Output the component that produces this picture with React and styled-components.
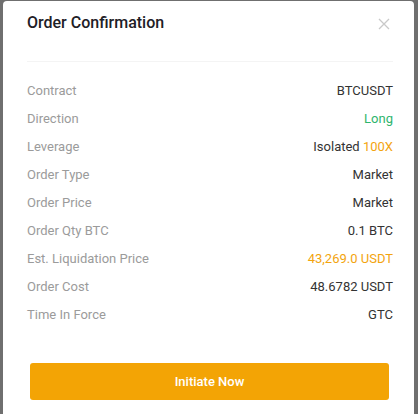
import React from "react";
import styled, { createGlobalStyle } from "styled-components";

const GlobalStyle = createGlobalStyle`
  html, body {
    margin: 0;
    padding: 0;
    background: #6f6f6f;
    font-family: Roboto, "Liberation Sans", Arial, sans-serif;
  }
  * { box-sizing: border-box; }
`;

const rows = [
  { label: "Contract", value: "BTCUSDT" },
  { label: "Direction", value: "Long", tone: "green" },
  { label: "Leverage", value: "Isolated", extra: "100X" },
  { label: "Order Type", value: "Market" },
  { label: "Order Price", value: "Market" },
  { label: "Order Qty BTC", value: "0.1 BTC" },
  { label: "Est. Liquidation Price", value: "43,269.0 USDT", tone: "orange" },
  { label: "Order Cost", value: "48.6782 USDT" },
  { label: "Time In Force", value: "GTC" },
];

const App = () => {
  return (
    <>
      <GlobalStyle />
      <Overlay>
        <Modal>
          <Header>
            <Title>Order Confirmation</Title>
            <CloseButton aria-label="close">
              <svg width="12" height="12" viewBox="0 0 12 12">
                <path d="M1 1L11 11M11 1L1 11" stroke="#c9c9c9" strokeWidth="1.3" fill="none" />
              </svg>
            </CloseButton>
          </Header>
          <List>
            {rows.map((r) => (
              <Row key={r.label}>
                <Label>{r.label}</Label>
                <Value $tone={r.tone}>
                  {r.value}
                  {r.extra && <Accent> {r.extra}</Accent>}
                </Value>
              </Row>
            ))}
          </List>
          <Footer>
            <SubmitButton>Initiate Now</SubmitButton>
          </Footer>
        </Modal>
      </Overlay>
    </>
  );
};

const Overlay = styled.div`
  min-height: 100vh;
  padding: 1px 4px 0 3px;
  overflow: hidden;
`;

const Modal = styled.div`
  background: #fff;
  border-radius: 4px 4px 0 0;
  padding: 0 21px 20px 24px;
  height: 420px;
`;

const Header = styled.div`
  display: flex;
  align-items: flex-start;
  justify-content: space-between;
  height: 61px;
  padding-top: 11px;
  border-bottom: 1px solid #f4f4f4;
`;

const Title = styled.h3`
  margin: 0;
  font-size: 16px;
  line-height: 22px;
  font-weight: 500;
  color: #1e2026;
`;

const CloseButton = styled.button`
  border: 0;
  background: none;
  padding: 0;
  margin: 6px 3px 0 0;
  width: 12px;
  height: 12px;
  display: flex;
  cursor: pointer;
`;

const List = styled.div`
  display: flex;
  flex-direction: column;
  padding-top: 14px;
`;

const Row = styled.div`
  display: flex;
  align-items: center;
  justify-content: space-between;
  height: 28px;
  font-size: 13px;
`;

const Label = styled.span`
  color: #9b9b9b;
`;

const Value = styled.span`
  color: ${({ $tone }) =>
    $tone === "green" ? "#2fb56d" : $tone === "orange" ? "#f3a40e" : "#333"};
`;

const Accent = styled.span`
  color: #f3a40e;
`;

const Footer = styled.div`
  padding: 35px 4px 0 3px;
`;

const SubmitButton = styled.button`
  width: 100%;
  height: 37px;
  border: 0;
  border-radius: 3px;
  background: #f3a405;
  color: #fff;
  font-family: inherit;
  font-size: 13px;
  font-weight: 500;
  cursor: pointer;
`;

export default App;
